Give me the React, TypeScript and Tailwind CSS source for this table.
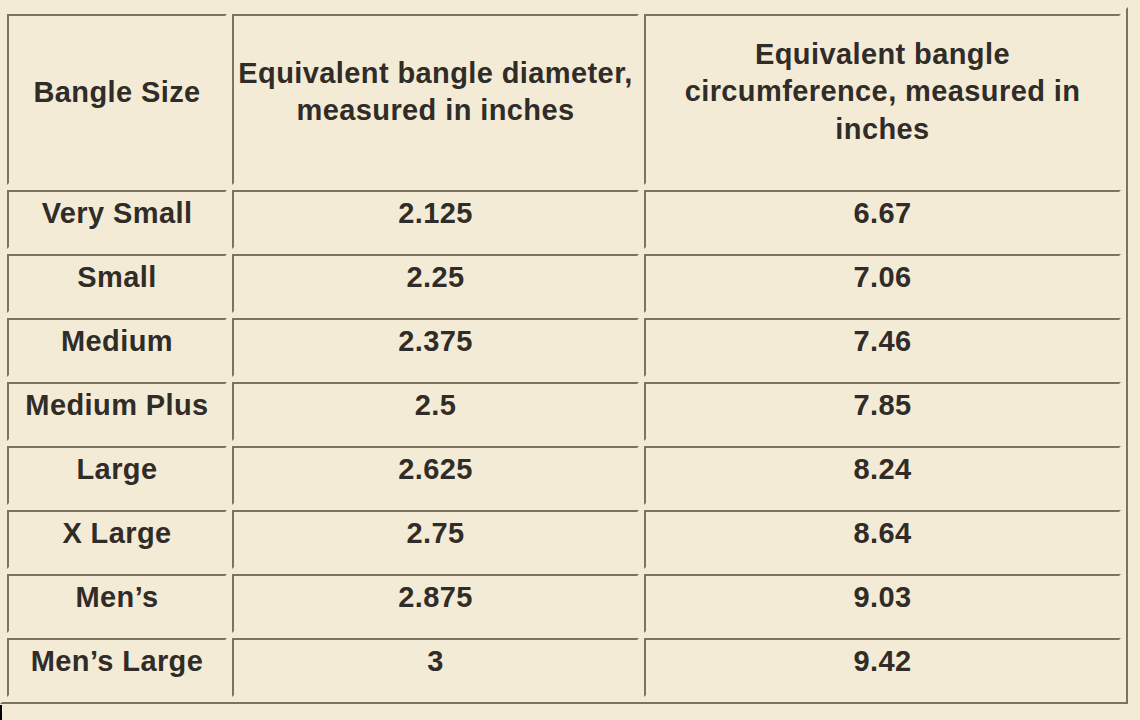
const rows = [
  ["Very Small", "2.125", "6.67"],
  ["Small", "2.25", "7.06"],
  ["Medium", "2.375", "7.46"],
  ["Medium Plus", "2.5", "7.85"],
  ["Large", "2.625", "8.24"],
  ["X Large", "2.75", "8.64"],
  ["Men’s", "2.875", "9.03"],
  ["Men’s Large", "3", "9.42"],
];

// inset cell border like an old-school <table border>
const cell =
  "flex items-center justify-center text-center border-2 border-t-[#7a735f] border-l-[#7a735f] border-b-[#f4ebd6] border-r-[#f4ebd6]";

const App = () => {
  return (
    <div className="min-h-screen bg-[#f4ebd6] font-['Liberation_Sans',Arial,sans-serif] font-bold text-[29px] tracking-[0.4px] text-[#302c28]">
      <div className="pt-[7px]">
        <div className="w-[1128px] grid grid-cols-[220px_407px_477px] gap-[5px] p-[5px] border-2 border-t-[#f4ebd6] border-l-[#f4ebd6] border-b-[#7a735f] border-r-[#7a735f]">
          <div className={`${cell} h-[171px] pb-[15px] leading-[37px]`}>
            Bangle Size
          </div>
          <div className={`${cell} h-[171px] pb-[15px] leading-[37px]`}>
            <p>
              Equivalent bangle diameter,
              <br />
              measured in inches
            </p>
          </div>
          <div className={`${cell} h-[171px] pb-[15px] leading-[37.5px]`}>
            <p>
              Equivalent bangle
              <br />
              circumference, measured in
              <br />
              inches
            </p>
          </div>
          {rows.map(([size, diameter, circ]) => (
            <div key={size} className="contents">
              <div className={`${cell} h-[59px] pb-[13px] leading-[34px]`}>
                {size}
              </div>
              <div className={`${cell} h-[59px] pb-[13px] leading-[34px]`}>
                {diameter}
              </div>
              <div className={`${cell} h-[59px] pb-[13px] leading-[34px]`}>
                {circ}
              </div>
            </div>
          ))}
        </div>
        <div className="mt-[1px] w-[2px] h-[15px] bg-black" />
      </div>
    </div>
  );
};

export default App;
